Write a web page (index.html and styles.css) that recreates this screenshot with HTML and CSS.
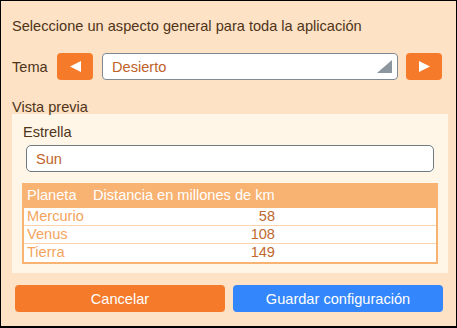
FILE: index.html
```html
<!DOCTYPE html>
<html lang="es">
<head>
  <meta charset="UTF-8">
  <title>Aspecto general</title>
  <link rel="stylesheet" href="styles.css">
</head>
<body>
  <div class="window">
    <div class="title">Seleccione un aspecto general para toda la aplicación</div>

    <!-- Theme selector -->
    <div class="theme-row">
      <span class="label">Tema</span>
      <button class="arrow-btn">
        <svg width="11" height="11" viewBox="0 0 11 11"><polygon points="11,0 11,11 0,5.5" fill="#fff"/></svg>
      </button>
      <div class="combo">
        <span>Desierto</span>
        <svg class="combo-corner" width="15" height="13" viewBox="0 0 15 13"><polygon points="15,0 15,13 0,13" fill="#8b969f"/></svg>
      </div>
      <button class="arrow-btn">
        <svg width="11" height="11" viewBox="0 0 11 11"><polygon points="0,0 0,11 11,5.5" fill="#fff"/></svg>
      </button>
    </div>

    <!-- Preview -->
    <div class="preview-label">Vista previa</div>
    <div class="preview">
      <div class="field-label">Estrella</div>
      <div class="input">Sun</div>
      <div class="grid">
        <div class="grid-row grid-head">
          <div class="col-name">Planeta</div>
          <div class="col-dist">Distancia en millones de km</div>
        </div>
        <div class="grid-row">
          <div class="col-name">Mercurio</div>
          <div class="col-dist num">58</div>
        </div>
        <div class="grid-row">
          <div class="col-name">Venus</div>
          <div class="col-dist num">108</div>
        </div>
        <div class="grid-row">
          <div class="col-name">Tierra</div>
          <div class="col-dist num">149</div>
        </div>
      </div>
    </div>

    <!-- Actions -->
    <div class="actions">
      <button class="btn btn-cancel">Cancelar</button>
      <button class="btn btn-save">Guardar configuración</button>
    </div>
  </div>
</body>
</html>
```

FILE: styles.css
```css
body {
  margin: 0;
  font-family: "Liberation Sans", Arial, sans-serif;
  font-size: 14.6px;
  color: #4f3418;
}
.window {
  width: 457px;
  height: 328px;
  box-sizing: border-box;
  border: 1px solid #000;
  border-bottom-width: 2px;
  background-color: #fde2c6;
  padding: 17px 10px 0 10px;
}
.title {
  line-height: 16px;
  padding-left: 1px;
}

/* Theme row */
.theme-row {
  display: flex;
  align-items: center;
  margin-top: 19px;
  height: 27px;
  padding-left: 1px;
}
.label {
  width: 45px;
}
.arrow-btn {
  width: 36px;
  height: 27px;
  border: none;
  border-radius: 4px;
  background-color: #f57b2b;
  padding: 0;
  display: flex;
  align-items: center;
  justify-content: center;
}
.combo {
  position: relative;
  width: 296px;
  height: 27px;
  box-sizing: border-box;
  margin: 0 8px 0 9px;
  border: 1px solid #7f8a93;
  border-radius: 4px;
  background-color: #fff;
  color: #c0622a;
  padding-left: 9px;
  display: flex;
  align-items: center;
}
.combo-corner {
  position: absolute;
  right: 5px;
  bottom: 6px;
}

/* Preview */
.preview-label {
  margin-top: 19px;
  line-height: 16px;
  height: 15px;
  padding-left: 1px;
}
.preview {
  width: 436px;
  box-sizing: border-box;
  margin-left: 1px;
  background-color: #fff6e7;
  padding: 10px 10px 9px 10px;
}
.field-label {
  line-height: 16px;
  padding-left: 1px;
}
.input {
  margin: 5px 4px 0 4px;
  height: 27px;
  box-sizing: border-box;
  border: 1px solid #6f7a83;
  border-radius: 5px;
  background-color: #fff;
  color: #c0622a;
  padding-left: 9px;
  display: flex;
  align-items: center;
}
.grid {
  margin-top: 11px;
  border: 2px solid #f8b272;
  background-color: #fff;
}
.grid-row {
  display: flex;
  height: 17px;
  line-height: 17px;
  border-bottom: 1px solid #fbd3ae;
  color: #f5a45c;
}
.grid-row:last-child {
  border-bottom: none;
  height: 18px;
}
.grid-head {
  height: 23px;
  line-height: 21px;
  background-color: #f8b272;
  color: #fff;
  border-bottom: none;
}
.col-name {
  width: 62px;
  padding-left: 3px;
}
.col-dist {
  width: 182px;
  padding-left: 4px;
}
.num {
  text-align: right;
  color: #c0692e;
}

/* Actions */
.actions {
  display: flex;
  gap: 8px;
  margin-top: 12px;
  padding-left: 4px;
}
.btn {
  width: 210px;
  height: 27px;
  border: none;
  border-radius: 4px;
  color: #fff;
  font-family: "Liberation Sans", Arial, sans-serif;
  font-size: 14.6px;
  padding: 0;
}
.btn-cancel {
  background-color: #f57b2b;
}
.btn-save {
  background-color: #3386fb;
}
```
